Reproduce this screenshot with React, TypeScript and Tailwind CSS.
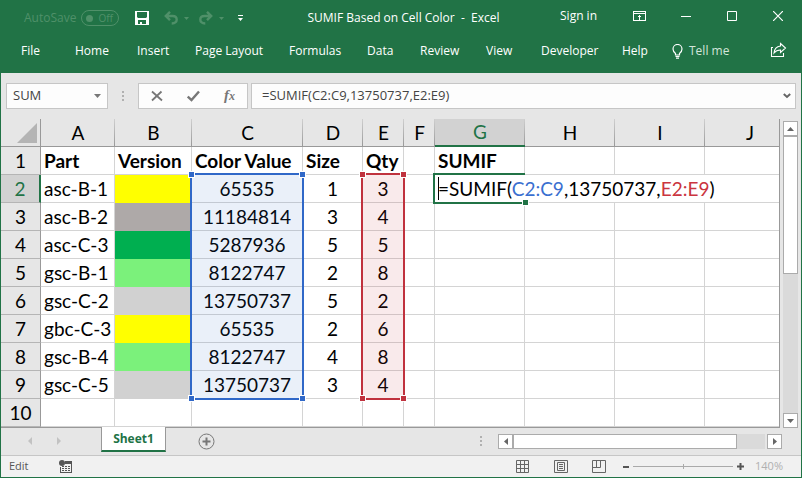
import { useState } from 'react';

const tabs = [
  { label: 'File', width: 'w-[54px]' },
  { label: 'Home', width: 'w-[62px]' },
  { label: 'Insert', width: 'w-[58px]' },
  { label: 'Page Layout', width: 'w-[94px]' },
  { label: 'Formulas', width: 'w-[78px]' },
  { label: 'Data', width: 'w-[53px]' },
  { label: 'Review', width: 'w-[66px]' },
  { label: 'View', width: 'w-[55px]' },
  { label: 'Developer', width: 'w-[81px]' },
  { label: 'Help', width: 'w-[50px]' },
];

const columns = [
  { id: 'A', width: 'w-[74px]' },
  { id: 'B', width: 'w-[77px]' },
  { id: 'C', width: 'w-[111px]' },
  { id: 'D', width: 'w-[60px]' },
  { id: 'E', width: 'w-[41px]' },
  { id: 'F', width: 'w-[31px]' },
  { id: 'G', width: 'w-[90px]' },
  { id: 'H', width: 'w-[90px]' },
  { id: 'I', width: 'w-[90px]' },
  { id: 'J', width: 'w-[90px]' },
];

const rows = [
  { part: 'asc-B-1', fill: 'bg-[#ffff00]', color: 65535, size: 1, qty: 3 },
  { part: 'asc-B-2', fill: 'bg-[#aea9a8]', color: 11184814, size: 3, qty: 4 },
  { part: 'asc-C-3', fill: 'bg-[#00af50]', color: 5287936, size: 5, qty: 5 },
  { part: 'gsc-B-1', fill: 'bg-[#7bf17b]', color: 8122747, size: 2, qty: 8 },
  { part: 'gsc-C-2', fill: 'bg-[#d1d1d1]', color: 13750737, size: 5, qty: 2 },
  { part: 'gbc-C-3', fill: 'bg-[#ffff00]', color: 65535, size: 2, qty: 6 },
  { part: 'gsc-B-4', fill: 'bg-[#7bf17b]', color: 8122747, size: 4, qty: 8 },
  { part: 'gsc-C-5', fill: 'bg-[#d1d1d1]', color: 13750737, size: 3, qty: 4 },
];

const cell = 'h-7 p-0 border-r border-b border-[#d4d4d4] whitespace-nowrap';

function TitleBar() {
  return (
    <header className="flex h-9 items-center text-xs text-white">
      <div className="flex flex-1 items-center pl-[23px]">
        <span className="w-[50px] text-[#4f9069]">AutoSave</span>
        <button className="ml-[7px] flex h-4 w-[38px] items-center justify-between rounded-full border border-[#4f9069] pl-1 pr-[5px] text-[10px] leading-none text-[#4f9069]">
          <span className="h-[7px] w-[7px] rounded-full bg-[#4f9069]" />
          Off
        </button>
        <button aria-label="Save" className="ml-4">
          <svg width="14" height="14" viewBox="0 0 14 14">
            <path d="M0 0h14v14H0z M2 1v5l1 1h8l1-1V1z M3 9v4h2v-2h2v2h4V9z" fill="#fff" fillRule="evenodd" />
          </svg>
        </button>
        <button aria-label="Undo" className="ml-[15px] flex items-center gap-1.5">
          <svg width="14" height="14" viewBox="0 0 14 14" fill="none" stroke="#4f9069" strokeWidth="2.400">
            <path d="M6 .8 1.800 5 6 9.200M2 5h6.500c2.800 0 4.200 1.500 4.200 3.500s-1.200 4-5 4" />
          </svg>
          <svg width="5" height="3" viewBox="0 0 5 3"><path d="M0 0h5L2.500 3z" fill="#4f9069" /></svg>
        </button>
        <button aria-label="Redo" className="ml-2.5 flex items-center gap-1.5">
          <svg width="14" height="14" viewBox="0 0 14 14" fill="none" stroke="#4f9069" strokeWidth="2.400">
            <path d="M8 .8 12.200 5 8 9.200M12 5H5.500C2.700 5 1.300 6.500 1.300 8.500s1.200 4 5 4" />
          </svg>
          <svg width="5" height="3" viewBox="0 0 5 3"><path d="M0 0h5L2.500 3z" fill="#4f9069" /></svg>
        </button>
        <button aria-label="Customize Quick Access Toolbar" className="ml-3.5">
          <svg width="5" height="6" viewBox="0 0 5 6" fill="#fff"><path d="M0 0h5v1H0zM0 3h5L2.500 6z" /></svg>
        </button>
      </div>
      <h1 className="whitespace-pre">SUMIF Based on Cell Color  -  Excel</h1>
      <div className="flex flex-1 items-center justify-end pb-1 pr-[18px]">
        <button className="mr-9 whitespace-nowrap">Sign in</button>
        <button aria-label="Ribbon Display Options" className="mr-[35px]">
          <svg width="13" height="10" viewBox="0 0 13 10" fill="none" stroke="#fff" shapeRendering="crispEdges">
            <path d="M.5.5h12v9H.5zM0 2.500h13M6.500 4v5" />
            <path d="m4.500 6.500 2-2 2 2" />
          </svg>
        </button>
        <button aria-label="Minimize" className="mr-9">
          <svg width="10" height="10" viewBox="0 0 10 10" stroke="#fff"><path d="M0 5.500h10" /></svg>
        </button>
        <button aria-label="Maximize" className="mr-9">
          <svg width="10" height="10" viewBox="0 0 10 10" fill="none" stroke="#fff"><path d="M.5.5h9v9h-9z" /></svg>
        </button>
        <button aria-label="Close">
          <svg width="10" height="10" viewBox="0 0 10 10" stroke="#fff" strokeWidth="1.200"><path d="m0 0 10 10M10 0 0 10" /></svg>
        </button>
      </div>
    </header>
  );
}

function RibbonTabs() {
  return (
    <nav className="flex h-[37px] items-start pl-5 pr-[14px] pt-1.5 text-xs leading-[18px] text-white">
      {tabs.map((tab) => (
        <button key={tab.label} className={`${tab.width} shrink-0 whitespace-nowrap text-left`}>{tab.label}</button>
      ))}
      <button className="flex items-center gap-1.5 whitespace-nowrap text-[#d3e5da]">
        <svg width="11" height="15" viewBox="0 0 11 15" fill="none" stroke="#fff" strokeWidth="1.200">
          <path d="M3.500 11V9.500C2 8.200 1 7 1 5a4.500 4.500 0 0 1 9 0c0 2-1 3.200-2.500 4.500V11zM3.500 12.500h4M4 14.200h3" />
        </svg>
        Tell me
      </button>
      <button aria-label="Share" className="ml-auto">
        <svg width="17" height="16" viewBox="0 0 17 16" fill="none" stroke="#fff" strokeWidth="1.100">
          <path d="M3 5.500H1.500v9h12V11" />
          <path d="M10.500 1.500 15.500 6l-5 4.500V8C7.500 8 5.500 9 4 11c.3-3.500 2.500-6.500 6.500-7z" />
        </svg>
      </button>
    </nav>
  );
}

function FormulaBar({ formula, onChange }: { formula: string; onChange: (v: string) => void }) {
  return (
    <div className="flex items-center px-[5px] py-2.5 text-[13px] text-[#444]">
      <div className="flex h-[26px] w-[102px] items-center border border-[#c6c6c6] bg-[#fdfdfd]">
        <input aria-label="Name Box" defaultValue="SUM" className="w-20 bg-transparent pl-1.5 outline-none" />
        <button aria-label="Names" className="ml-[7px]">
          <svg width="7" height="4" viewBox="0 0 7 4"><path d="M0 0h7L3.500 4z" fill="#777" /></svg>
        </button>
      </div>
      <svg className="ml-3.5" width="2" height="10" viewBox="0 0 2 10" fill="#b0b0b0"><path d="M0 0h2v2H0zM0 4h2v2H0zM0 8h2v2H0z" /></svg>
      <div className="ml-3.5 flex h-[26px] w-[110px] items-center border border-[#c6c6c6] bg-[#fdfdfd] pl-3">
        <button aria-label="Cancel">
          <svg width="12" height="12" viewBox="0 0 12 12" stroke="#777" strokeWidth="1.800"><path d="M1 1.500 11 10.500M10.500 1.500 1 10.500" /></svg>
        </button>
        <button aria-label="Enter" className="ml-6">
          <svg width="13" height="12" viewBox="0 0 13 12" fill="none" stroke="#777" strokeWidth="2.400"><path d="m.8 6.500 3.700 3.500L12 1.500" /></svg>
        </button>
        <button aria-label="Insert Function" className="ml-6 font-['Liberation_Serif',serif] text-[15px] font-bold italic leading-none text-[#777]">
          f<span className="text-xs">x</span>
        </button>
      </div>
      <div className="ml-[3px] flex h-[26px] flex-1 items-center border border-[#c6c6c6] bg-[#fdfdfd]">
        <input aria-label="Formula Bar" value={formula} onChange={(e) => onChange(e.target.value)} className="min-w-0 flex-1 bg-transparent pl-2.5 outline-none" />
        <button aria-label="Expand Formula Bar" className="mr-1">
          <svg width="8" height="6" viewBox="0 0 8 6" fill="none" stroke="#666" strokeWidth="2"><path d="m.8 1 3.200 3L7.200 1" /></svg>
        </button>
      </div>
    </div>
  );
}

// Corner grips of a referenced range
function Handles({ color }: { color: string }) {
  const base = `absolute h-[7px] w-[7px] border border-white ${color}`;
  return (
    <>
      <span className={`${base} -left-1 -top-1`} />
      <span className={`${base} -right-1 -top-1`} />
      <span className={`${base} -bottom-1 -left-1`} />
      <span className={`${base} -bottom-1 -right-1`} />
    </>
  );
}

function ActiveFormula({ formula }: { formula: string }) {
  const parts = formula.split(/(C2:C9|E2:E9)/);
  return (
    <>
      {parts.map((part, i) => (
        <span key={i} className={part === 'C2:C9' ? 'text-[#3a6fd0]' : part === 'E2:E9' ? 'text-[#cb3540]' : ''}>{part}</span>
      ))}
    </>
  );
}

function RowHeader({ n }: { n: number }) {
  const active = n === 2;
  return (
    <th className={`h-7 border-b border-b-[#b5b5b5] p-0 text-center font-normal ${active ? 'border-r-2 border-r-[#217346] bg-[#d2d2d2] text-[#217346]' : 'border-r border-r-[#999] bg-[#e6e6e6]'}`}>{n}</th>
  );
}

function Grid({ formula }: { formula: string }) {
  return (
    <div className="relative min-w-0 flex-1 overflow-hidden border-b border-r border-[#999]">
      <table className="w-[794px] table-fixed border-separate border-spacing-0 bg-white font-[Lato,'Open_Sans',sans-serif] text-[19px] leading-[26px] text-black">
        <colgroup>
          <col className="w-10" />
          {columns.map((c) => <col key={c.id} className={c.width} />)}
        </colgroup>
        <thead className="bg-[#e6e6e6]">
          <tr>
            <th className="h-7 border-b border-r border-[#999] p-0" aria-label="Select All">
              <svg className="ml-4" width="20" height="20" viewBox="0 0 20 20"><path d="M20 0v20H0z" fill="#b4b4b4" /></svg>
            </th>
            {columns.map((c) => (
              <th
                key={c.id}
                className={`h-7 bg-[linear-gradient(#cfcfcf,#999)] bg-[length:1px_100%] bg-right bg-no-repeat p-0 font-normal ${c.id === 'G' ? 'border-b-2 border-[#217346] bg-[#d2d2d2] text-[#217346]' : 'border-b border-[#999]'}`}
              >
                {c.id}
              </th>
            ))}
          </tr>
        </thead>
        <tbody>
          <tr className="text-left font-bold">
            <RowHeader n={1} />
            <td className={`${cell} pl-[3px]`}>Part</td>
            <td className={`${cell} pl-[3px]`}>Version</td>
            <td className={`${cell} pl-[3px]`}>Color Value</td>
            <td className={`${cell} pl-[3px]`}>Size</td>
            <td className={`${cell} pl-[3px]`}>Qty</td>
            <td className={cell} />
            <td className={`${cell} pl-[3px]`}>SUMIF</td>
            <td className={cell} />
            <td className={cell} />
            <td className={cell} />
          </tr>
          {rows.map((r, i) => (
            <tr key={i}>
              <RowHeader n={i + 2} />
              <td className={`${cell} pl-[3px]`}>{r.part}</td>
              <td className={`h-7 p-0 ${r.fill}`} />
              <td className={`${cell} text-center`}>{r.color}</td>
              <td className={`${cell} text-center`}>{r.size}</td>
              <td className={`${cell} text-center`}>{r.qty}</td>
              <td className={cell} />
              {i === 0 ? (
                <td colSpan={4} className={`${cell} pl-[3px]`}><ActiveFormula formula={formula} /></td>
              ) : (
                <>
                  <td className={cell} />
                  <td className={cell} />
                  <td className={cell} />
                  <td className={cell} />
                </>
              )}
            </tr>
          ))}
          <tr>
            <RowHeader n={10} />
            {columns.map((c) => <td key={c.id} className={cell} />)}
          </tr>
        </tbody>
      </table>

      {/* Referenced ranges and the cell being edited */}
      <div className="absolute left-[189px] top-[54px] h-[227px] w-[114px] border-2 border-[#3068c8] bg-[#3068c8]/10 bg-clip-padding">
        <Handles color="bg-[#3068c8]" />
      </div>
      <div className="absolute left-[360px] top-[54px] h-[227px] w-11 border-2 border-[#c0323e] bg-[#c0323e]/10 bg-clip-padding">
        <Handles color="bg-[#c0323e]" />
      </div>
      <div className="absolute left-[432px] top-[54px] h-[31px] w-[92px] border-y-2 border-l-2 border-[#217346]">
        <span className="absolute left-[3px] top-0.5 h-[23px] w-px bg-black" />
        <span className="absolute -bottom-1 -right-1 h-[7px] w-[7px] border border-white bg-[#217346]" />
      </div>
    </div>
  );
}

function VerticalScroll() {
  return (
    <div className="mx-[3px] mt-0.5 flex w-[15px] flex-col bg-[#dadada]">
      <button aria-label="Scroll up" className="flex h-[15px] items-center justify-center border border-[#ababab] bg-white">
        <svg width="7" height="4" viewBox="0 0 7 4"><path d="M0 4h7L3.500 0z" fill="#666" /></svg>
      </button>
      <div className="h-[138px] border border-[#ababab] bg-white" />
      <button aria-label="Scroll down" className="mt-auto flex h-[15px] items-center justify-center border border-[#ababab] bg-white">
        <svg width="7" height="4" viewBox="0 0 7 4"><path d="M0 0h7L3.500 4z" fill="#666" /></svg>
      </button>
    </div>
  );
}

function SheetBar() {
  return (
    <div className="flex h-7 items-start border-b border-[#c6c6c6] pr-[19px]">
      <button aria-label="Previous sheet" className="ml-[27px] mt-[9px]">
        <svg width="4" height="8" viewBox="0 0 4 8"><path d="M4 0v8L0 4z" fill="#c2c2c2" /></svg>
      </button>
      <button aria-label="Next sheet" className="ml-[25px] mt-[9px]">
        <svg width="4" height="8" viewBox="0 0 4 8"><path d="M0 0v8l4-4z" fill="#c2c2c2" /></svg>
      </button>
      <button className="relative -mt-px ml-10 h-[25px] w-[65px] border-x border-b-2 border-x-[#999] border-b-[#217346] bg-white text-xs font-bold leading-6 text-[#217346]">Sheet1</button>
      <button aria-label="New sheet" className="ml-8 mt-[5px]">
        <svg width="17" height="17" viewBox="0 0 17 17" fill="none" stroke="#777">
          <circle cx="8.500" cy="8.500" r="7.500" />
          <path d="M4.500 8.500h8M8.500 4.500v8" strokeWidth="2" />
        </svg>
      </button>
      <svg className="ml-auto mr-4 mt-2" width="2" height="10" viewBox="0 0 2 10" fill="#b0b0b0"><path d="M0 0h2v2H0zM0 4h2v2H0zM0 8h2v2H0z" /></svg>
      <div className="mt-1.5 flex h-[15px] w-[284px]">
        <button aria-label="Scroll left" className="flex w-[15px] items-center justify-center border border-[#ababab] bg-white">
          <svg width="4" height="7" viewBox="0 0 4 7"><path d="M4 0v7L0 3.500z" fill="#666" /></svg>
        </button>
        <div className="w-[224px] border border-[#ababab] bg-white" />
        <div className="mr-0.5 flex-1 bg-[#dadada]" />
        <button aria-label="Scroll right" className="flex w-[15px] items-center justify-center border border-[#ababab] bg-white">
          <svg width="4" height="7" viewBox="0 0 4 7"><path d="M0 0v7l4-3.500z" fill="#666" /></svg>
        </button>
      </div>
    </div>
  );
}

function StatusBar() {
  return (
    <footer className="flex h-[21px] items-center bg-[#f1f1f1] pl-2 pr-[18px] text-[11px] text-[#555]">
      <span>Edit</span>
      <button aria-label="Record macro" className="ml-[30px]">
        <svg width="13" height="13" viewBox="0 0 13 13" fill="none" stroke="#555" shapeRendering="crispEdges">
          <path d="M6 1.500h6.500v11h-11V7" />
          <path d="M6 3h6" strokeWidth="2" />
          <path d="M3 6.500h8M3 8.500h8M3 10.500h8" strokeDasharray="2 1" />
          <circle cx="3" cy="3" r="3" fill="#555" stroke="none" shapeRendering="auto" />
        </svg>
      </button>
      <button aria-label="Normal view" className="ml-auto mr-[25px]">
        <svg width="13" height="13" viewBox="0 0 13 13" fill="none" stroke="#666"><path d="M.5.5h12v12H.5zM.5 4.500h12M.5 8.500h12M4.500.5v12M8.500.5v12" /></svg>
      </button>
      <button aria-label="Page layout view" className="mr-6">
        <svg width="14" height="13" viewBox="0 0 14 13" fill="none" stroke="#666"><path d="M.5.5h13v12H.5zM3.500 2.500h7v8h-7zM5 4.500h4M5 6.500h4M5 8.500h4" /></svg>
      </button>
      <button aria-label="Page break view" className="mr-[17px]">
        <svg width="14" height="13" viewBox="0 0 14 13" fill="none" stroke="#666"><path d="M.5.5h13v12H.5zM.5 7.500h8v-7M4.500.5v7" /></svg>
      </button>
      <button aria-label="Zoom out">
        <svg width="6" height="7" viewBox="0 0 6 7" stroke="#555" strokeWidth="2"><path d="M0 4h6" /></svg>
      </button>
      <svg className="mx-1" width="100" height="5" viewBox="0 0 100 5" stroke="#aaa"><path d="M0 2.500h100M50.500 0v5" /></svg>
      <button aria-label="Zoom in">
        <svg width="7" height="7" viewBox="0 0 7 7" stroke="#555" strokeWidth="2"><path d="M0 3.500h7M3.500 0v7" /></svg>
      </button>
      <button className="ml-[11px] text-[#b0b0b0]">140%</button>
    </footer>
  );
}

export default function App() {
  const [formula, setFormula] = useState('=SUMIF(C2:C9,13750737,E2:E9)');

  return (
    <div className="min-h-screen overflow-hidden border-x border-b border-[#217346] bg-[#e6e6e6] font-['Open_Sans','Noto_Sans',sans-serif]">
      <div className="bg-[#217346]">
        <TitleBar />
        <RibbonTabs />
      </div>
      <FormulaBar formula={formula} onChange={setFormula} />
      <div className="flex">
        <Grid formula={formula} />
        <VerticalScroll />
      </div>
      <SheetBar />
      <StatusBar />
    </div>
  );
}
